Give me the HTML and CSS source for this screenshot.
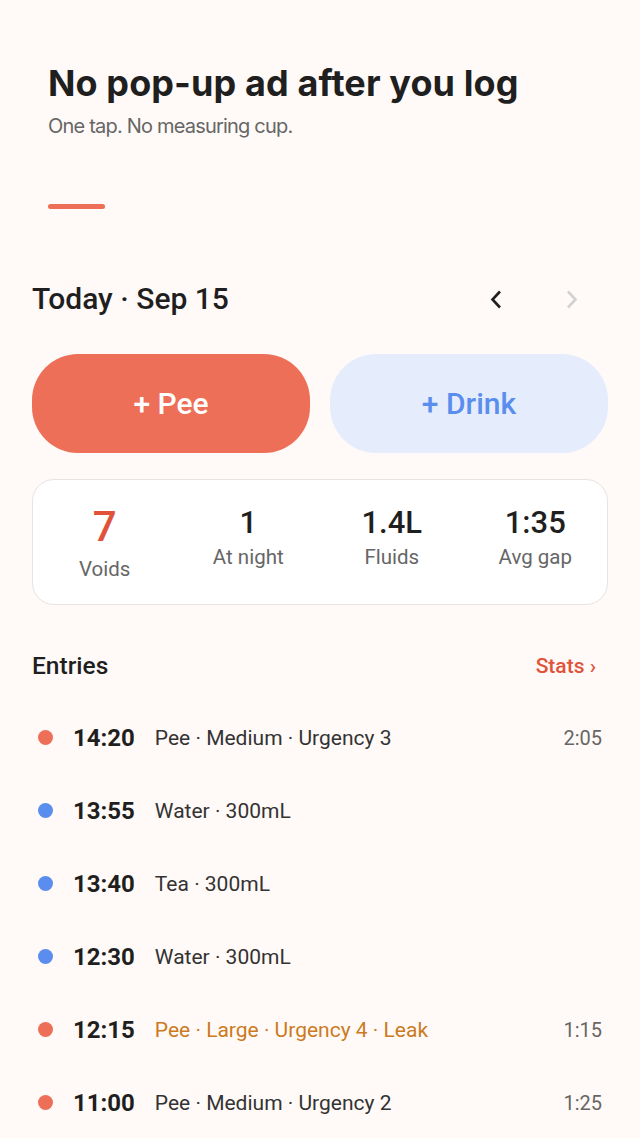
FILE: index.html
```html
<!DOCTYPE html>
<html lang="en">

<head>
    <meta charset="UTF-8">
    <meta name="viewport" content="width=device-width, initial-scale=1.0">
    <title>Bladder Diary</title>
    <link rel="stylesheet" href="styles.css">
</head>

<body>
    <header class="promo">
        <h1>No pop-up ad after you log</h1>
        <p>One tap. No measuring cup.</p>
        <div class="promo-bar"></div>
    </header>

    <div class="day-row">
        <h2>Today · Sep 15</h2>
        <div class="day-nav">
            <button class="nav-btn">
                <svg width="12" height="19" viewBox="0 0 12 19"><path d="M10 1.5 L2.5 9.5 L10 17.5" fill="none" stroke="#1f1f1f" stroke-width="2.6"/></svg>
            </button>
            <button class="nav-btn">
                <svg width="12" height="19" viewBox="0 0 12 19"><path d="M2 1.5 L9.5 9.5 L2 17.5" fill="none" stroke="#d2d2d2" stroke-width="2.6"/></svg>
            </button>
        </div>
    </div>

    <div class="log-buttons">
        <button class="log-btn pee">+ Pee</button>
        <button class="log-btn drink">+ Drink</button>
    </div>

    <div class="stats-card">
        <div class="stat main">
            <span class="stat-value">7</span>
            <span class="stat-label">Voids</span>
        </div>
        <div class="stat">
            <span class="stat-value">1</span>
            <span class="stat-label">At night</span>
        </div>
        <div class="stat">
            <span class="stat-value">1.4L</span>
            <span class="stat-label">Fluids</span>
        </div>
        <div class="stat">
            <span class="stat-value">1:35</span>
            <span class="stat-label">Avg gap</span>
        </div>
    </div>

    <div class="entries-head">
        <h3>Entries</h3>
        <a href="#" class="stats-link">Stats ›</a>
    </div>

    <ul class="entries">
        <li class="entry">
            <span class="dot pee"></span>
            <span class="time">14:20</span>
            <span class="desc">Pee · Medium · Urgency 3</span>
            <span class="gap">2:05</span>
        </li>
        <li class="entry">
            <span class="dot drink"></span>
            <span class="time">13:55</span>
            <span class="desc">Water · 300mL</span>
        </li>
        <li class="entry">
            <span class="dot drink"></span>
            <span class="time">13:40</span>
            <span class="desc">Tea · 300mL</span>
        </li>
        <li class="entry">
            <span class="dot drink"></span>
            <span class="time">12:30</span>
            <span class="desc">Water · 300mL</span>
        </li>
        <li class="entry">
            <span class="dot pee"></span>
            <span class="time">12:15</span>
            <span class="desc leak">Pee · Large · Urgency 4 · Leak</span>
            <span class="gap">1:15</span>
        </li>
        <li class="entry">
            <span class="dot pee"></span>
            <span class="time">11:00</span>
            <span class="desc">Pee · Medium · Urgency 2</span>
            <span class="gap">1:25</span>
        </li>
    </ul>
</body>

</html>
```

FILE: styles.css
```css
body {
    margin: 0;
    padding: 0 32px;
    background-color: #FFFAF7;
    font-family: 'Roboto', sans-serif;
    color: #222222;
}

/* Promo header */
.promo {
    padding: 61px 16px 0;
}

.promo h1 {
    margin: 0;
    font-family: 'Inter', sans-serif;
    font-size: 36px;
    line-height: 44px;
    font-weight: 700;
    letter-spacing: 0.1px;
    color: #1f1f1f;
}

.promo p {
    margin: 9px 0 0;
    font-family: 'Inter', sans-serif;
    font-size: 20px;
    line-height: 24px;
    font-weight: 400;
    letter-spacing: -0.8px;
    color: #666666;
}

.promo-bar {
    width: 57px;
    height: 5px;
    border-radius: 3px;
    background-color: #EE6F57;
    margin-top: 66px;
}

/* Day row */
.day-row {
    display: flex;
    justify-content: space-between;
    align-items: center;
    margin-top: 72px;
}

.day-row h2 {
    margin: 0;
    font-size: 30px;
    line-height: 36px;
    font-weight: 500;
    color: #1f1f1f;
}

.day-nav {
    display: flex;
    gap: 36px;
    margin-right: 16px;
}

.nav-btn {
    width: 40px;
    height: 36px;
    border: none;
    background: none;
    padding: 0;
    display: flex;
    align-items: center;
    justify-content: center;
}

/* Log buttons */
.log-buttons {
    display: grid;
    grid-template-columns: 1fr 1fr;
    gap: 20px;
    margin-top: 37px;
}

.log-btn {
    height: 99px;
    border: none;
    border-radius: 46px;
    font-family: 'Roboto', sans-serif;
    font-size: 30px;
    font-weight: 500;
}

.log-btn.pee {
    background-color: #EE6F57;
    color: #FFFFFF;
}

.log-btn.drink {
    background-color: #E5EDFC;
    color: #5B8DEF;
}

/* Stats card */
.stats-card {
    display: grid;
    grid-template-columns: repeat(4, 1fr);
    margin-top: 26px;
    padding: 26px 0 23px;
    background-color: #FFFFFF;
    border: 1px solid #E6E3E1;
    border-radius: 22px;
}

.stat {
    display: flex;
    flex-direction: column;
    align-items: center;
}

.stat-value {
    font-size: 31px;
    line-height: 34px;
    font-weight: 500;
    color: #1f1f1f;
}

.stat.main .stat-value {
    font-size: 42px;
    line-height: 50px;
    margin-top: -4px;
    color: #E0533A;
}

.stat-label {
    margin-top: 5px;
    font-size: 20.5px;
    line-height: 24px;
    color: #666666;
}

/* Entries */
.entries-head {
    display: flex;
    justify-content: space-between;
    align-items: center;
    margin-top: 46px;
    padding-right: 12px;
}

.entries-head h3 {
    margin: 0;
    font-size: 24.5px;
    line-height: 30px;
    font-weight: 500;
    color: #1f1f1f;
}

.stats-link {
    font-size: 21px;
    font-weight: 500;
    color: #E0533A;
    text-decoration: none;
}

.entries {
    list-style: none;
    margin: 20px 0 0;
    padding: 0;
}

.entry {
    display: flex;
    align-items: center;
    height: 73px;
    padding: 0 6px;
}

.dot {
    width: 15px;
    height: 15px;
    border-radius: 50%;
    flex-shrink: 0;
}

.dot.pee {
    background-color: #EE6F57;
}

.dot.drink {
    background-color: #5B8DEF;
}

.time {
    margin-left: 20px;
    font-size: 24px;
    font-weight: 700;
    color: #1f1f1f;
}

.desc {
    margin-left: 20px;
    font-size: 21px;
    color: #333333;
}

.desc.leak {
    color: #CC7A22;
}

.gap {
    margin-left: auto;
    font-size: 20px;
    color: #666666;
}
```
